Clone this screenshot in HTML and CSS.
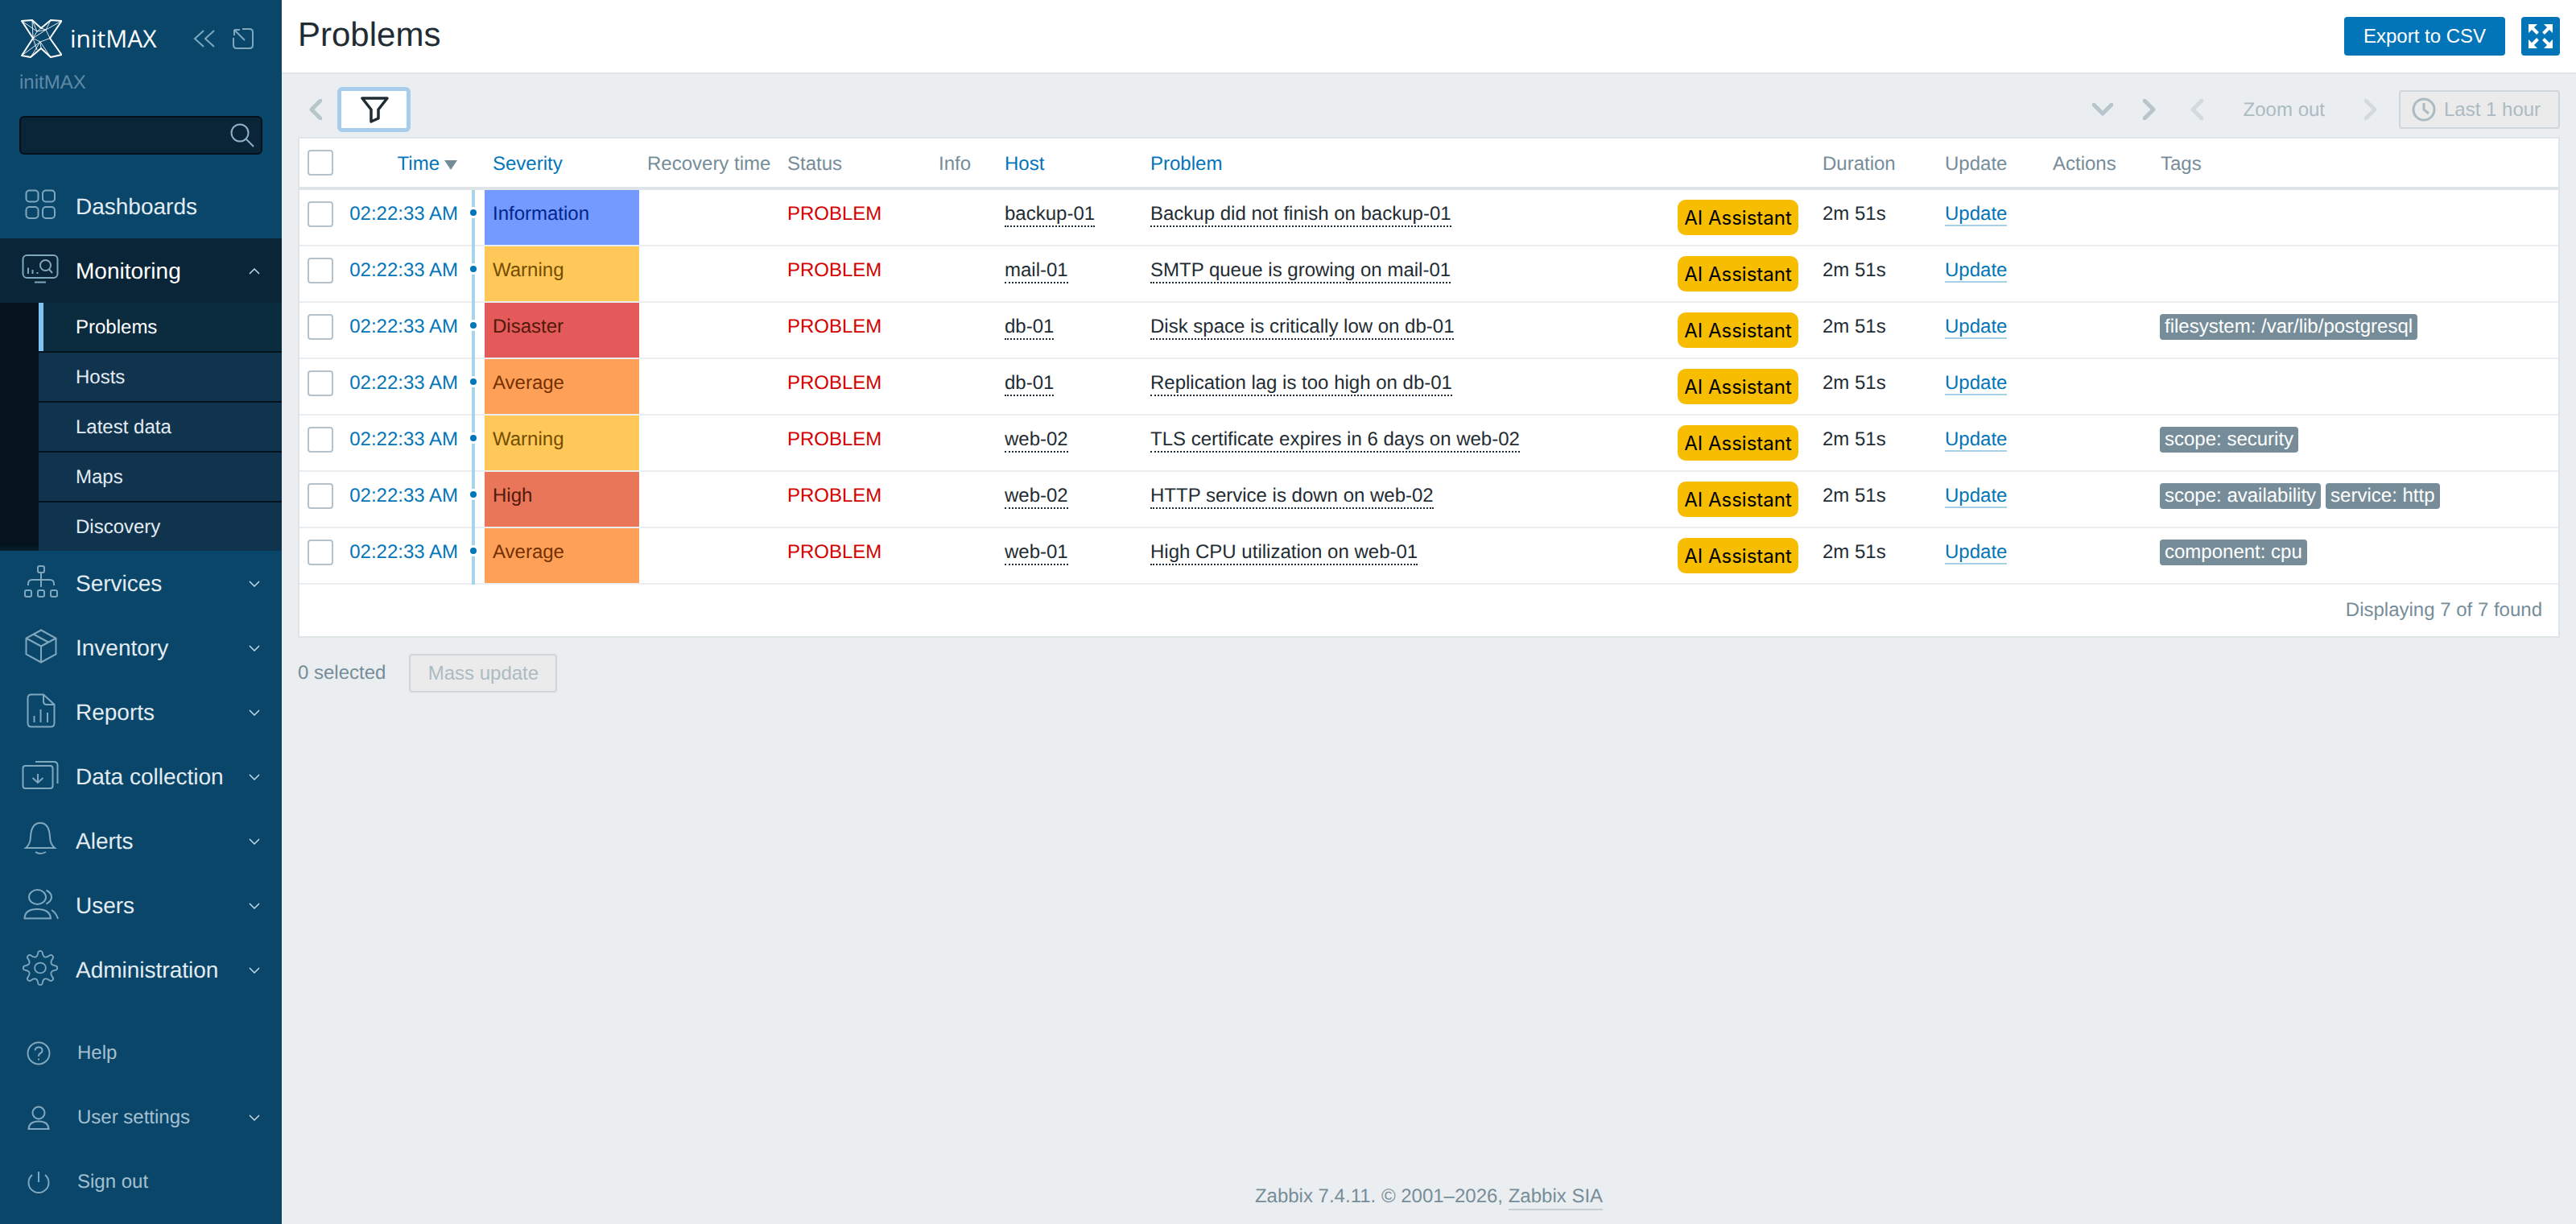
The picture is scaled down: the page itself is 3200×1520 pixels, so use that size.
FILE: index.html
```html
<!DOCTYPE html>
<html lang="en">
<head>
    <meta charset="UTF-8">
    <title>Problems</title>
    <link rel="stylesheet" href="styles.css">
</head>
<body>
    <aside class="sidebar">
        <div class="brand">
            <svg class="logo" viewBox="26 24 51 48" width="51" height="48">
                <path class="logo-edge" d="M27 26 40 25 51 35 63 25 76.500 26 62 47.500 76.500 68 63 71 51 60 38 71 27 69 41 47.500Z"/>
                <path class="logo-mesh" d="M40 25 46 39 57 37 63 25M27 26 46 39 41 47.500 50 52 62 47.500 57 37 51 35 46 39M76.500 26 57 37M41 47.500 57 37M50 52 51 60M50 52 38 71M50 52 63 71M62 47.500 76.500 68M41 47.500 46 62M27 69 50 52M40 25 41 47.500"/>
            </svg>
            <span class="brand-name">initMAX</span>
            <svg class="brand-btn" viewBox="0 0 28 24" width="28" height="24">
                <path d="M13 2 2 12 13 22M26 2 15 12 26 22"/>
            </svg>
            <svg class="brand-btn" viewBox="0 0 26 26" width="26" height="26">
                <path d="M12 1H21Q25 1 25 5V21Q25 25 21 25H5Q1 25 1 21V12M2 2 15 15M2 2H9M2 2V9"/>
            </svg>
        </div>
        <div class="server-name">initMAX</div>
        <div class="search">
            <svg viewBox="0 0 30 30" width="30" height="30">
                <circle cx="12" cy="12" r="10.500"/>
                <path d="M20 20 29 29"/>
            </svg>
        </div>

        <nav class="nav">
            <a class="nav-item">
                <svg class="nav-icon" viewBox="0 0 94 80" width="94" height="80">
                    <rect x="32.500" y="20.500" width="15" height="14" rx="4"/><rect x="53" y="20.500" width="15" height="14" rx="4"/>
                    <rect x="32.500" y="41" width="15" height="14" rx="4"/><rect x="53" y="41" width="15" height="14" rx="4"/>
                </svg>
                Dashboards
            </a>
            <div class="nav-open">
                <a class="nav-item">
                    <svg class="nav-icon" viewBox="0 0 94 80" width="94" height="80">
                        <rect x="28.500" y="21" width="43" height="28" rx="5"/>
                        <path d="M43 54.500H57M35 44V36.500M40.500 44V39M46.500 44V42"/>
                        <circle cx="56.500" cy="33.500" r="6.500"/>
                        <path d="M61 38.500 65 43"/>
                    </svg>
                    Monitoring
                    <svg class="caret" viewBox="0 0 14 8" width="14" height="8"><path d="M1 7 7 1 13 7"/></svg>
                </a>
                <div class="subnav">
                    <a class="sub-item active">Problems</a>
                    <a class="sub-item">Hosts</a>
                    <a class="sub-item">Latest data</a>
                    <a class="sub-item">Maps</a>
                    <a class="sub-item">Discovery</a>
                </div>
            </div>
            <a class="nav-item">
                <svg class="nav-icon" viewBox="0 0 94 80" width="94" height="80">
                    <rect x="47" y="19" width="8" height="8" rx="2"/>
                    <rect x="31" y="49" width="8" height="8" rx="2"/><rect x="47" y="49" width="8" height="8" rx="2"/><rect x="63" y="49" width="8" height="8" rx="2"/>
                    <path d="M51 27V45M35 43V41Q35 36 40 36H62Q67 36 67 41V43"/>
                </svg>
                Services
                <svg class="caret" viewBox="0 0 14 8" width="14" height="8"><path d="M1 1 7 7 13 1"/></svg>
            </a>
            <a class="nav-item">
                <svg class="nav-icon" viewBox="0 0 94 80" width="94" height="80">
                    <path d="M51 18.500 69.500 28.500V48.500L51 58.500 32.500 48.500V28.500ZM32.500 28.500 51 38.500 69.500 28.500M51 38.500V58.500M41.500 23.500 60 33.500"/>
                </svg>
                Inventory
                <svg class="caret" viewBox="0 0 14 8" width="14" height="8"><path d="M1 1 7 7 13 1"/></svg>
            </a>
            <a class="nav-item">
                <svg class="nav-icon" viewBox="0 0 94 80" width="94" height="80">
                    <path d="M54 18.500H39Q34.500 18.500 34.500 23V54Q34.500 58.500 39 58.500H63Q67.500 58.500 67.500 54V31ZM54 18.500V27Q54 31 58 31H67.500"/>
                    <path d="M42.500 53V45M50.500 53V37M59 53V41"/>
                </svg>
                Reports
                <svg class="caret" viewBox="0 0 14 8" width="14" height="8"><path d="M1 1 7 7 13 1"/></svg>
            </a>
            <a class="nav-item">
                <svg class="nav-icon" viewBox="0 0 94 80" width="94" height="80">
                    <rect x="28.500" y="27" width="37" height="28" rx="3"/>
                    <path d="M44 22H67Q71.500 22 71.500 26.500V49M47 37V48M40.500 42 47 48 53.500 42"/>
                </svg>
                Data collection
                <svg class="caret" viewBox="0 0 14 8" width="14" height="8"><path d="M1 1 7 7 13 1"/></svg>
            </a>
            <a class="nav-item">
                <svg class="nav-icon" viewBox="0 0 94 80" width="94" height="80">
                    <path d="M32 49H68Q62 44 62 35 61 18 50 18 39 18 38 35 38 44 32 49ZM44 54Q50 58 57 54"/>
                </svg>
                Alerts
                <svg class="caret" viewBox="0 0 14 8" width="14" height="8"><path d="M1 1 7 7 13 1"/></svg>
            </a>
            <a class="nav-item">
                <svg class="nav-icon" viewBox="0 0 94 80" width="94" height="80">
                    <ellipse cx="46.500" cy="30" rx="10.500" ry="9"/>
                    <path d="M30.500 56.500Q31 45 46 45 62 45 63 56.500ZM57.500 21.500Q64 25 64 30 64 35 57.500 38.500M64 46Q70 50 72 57"/>
                </svg>
                Users
                <svg class="caret" viewBox="0 0 14 8" width="14" height="8"><path d="M1 1 7 7 13 1"/></svg>
            </a>
            <a class="nav-item">
                <svg class="nav-icon" viewBox="0 0 94 80" width="94" height="80">
                    <g transform="translate(50 38) scale(.92)">
                        <path d="M-2.900-20.800A3 3 0 0 1 2.900-20.800Q4.400-10.800 12.600-16.800A3 3 0 0 1 16.800-12.600Q10.800-4.400 20.800-2.900A3 3 0 0 1 20.800 2.900Q10.800 4.400 16.800 12.600A3 3 0 0 1 12.600 16.800Q4.400 10.800 2.900 20.800A3 3 0 0 1-2.900 20.800Q-4.400 10.800-12.600 16.800A3 3 0 0 1-16.800 12.600Q-10.800 4.400-20.800 2.900A3 3 0 0 1-20.800-2.900Q-10.800-4.400-16.800-12.600A3 3 0 0 1-12.600-16.800Q-4.400-10.800-2.900-20.800Z"/>
                        <ellipse cx="0" cy="0" rx="7.500" ry="7"/>
                    </g>
                </svg>
                Administration
                <svg class="caret" viewBox="0 0 14 8" width="14" height="8"><path d="M1 1 7 7 13 1"/></svg>
            </a>
        </nav>

        <nav class="nav-user">
            <a class="nav-item small">
                <svg class="nav-icon" viewBox="0 0 96 80" width="96" height="80">
                    <circle cx="48" cy="41" r="13.500"/>
                    <path d="M43.500 37.500Q44 33.500 48 33.500 52.500 33.500 52.500 37.500 52.500 40 50 41 48 42 48 45M48 47.500V49.500"/>
                </svg>
                Help
            </a>
            <a class="nav-item small">
                <svg class="nav-icon" viewBox="0 0 96 80" width="96" height="80">
                    <circle cx="48" cy="35" r="7.500"/>
                    <path d="M35.500 55Q36 45.500 48 45.500 60 45.500 60.500 55Z"/>
                </svg>
                User settings
                <svg class="caret" viewBox="0 0 14 8" width="14" height="8"><path d="M1 1 7 7 13 1"/></svg>
            </a>
            <a class="nav-item small">
                <svg class="nav-icon" viewBox="0 0 96 80" width="96" height="80">
                    <path d="M40 32A12.500 12.500 0 1 0 56 32M48 28V41"/>
                </svg>
                Sign out
            </a>
        </nav>
    </aside>

    <main class="main">
        <header class="page-header">
            <h1>Problems</h1>
            <div class="header-controls">
                <button class="btn-primary">Export to CSV</button>
                <button class="btn-kiosk" aria-label="Fullscreen">
                    <svg viewBox="0 0 30 30" width="30" height="30">
                        <path d="M0 0H11L0 11ZM30 0H19L30 11ZM0 30H11L0 19ZM30 30H19L30 19Z"/>
                        <path class="kiosk-line" d="M5 5 11.500 11.500M25 5 18.500 11.500M5 25 11.500 18.500M25 25 18.500 18.500"/>
                    </svg>
                </button>
            </div>
        </header>

        <div class="toolbar">
            <svg class="arrow" viewBox="0 0 16 26" width="16" height="26"><path d="M14 2 3 13 14 24"/></svg>
            <button class="filter-tab" aria-label="Filter">
                <svg viewBox="0 0 38 34" width="38" height="34"><path d="M4 3H35L24 17V28L15 32V17Z"/></svg>
            </button>
            <div class="time-nav">
                <svg class="arrow down" viewBox="0 0 26 16" width="26" height="16"><path d="M2 2 13 13 24 2"/></svg>
                <svg class="arrow fwd" viewBox="0 0 16 26" width="16" height="26"><path d="M2 2 13 13 2 24"/></svg>
                <svg class="arrow off back-2" viewBox="0 0 16 26" width="16" height="26"><path d="M14 2 3 13 14 24"/></svg>
                <span class="zoom-out">Zoom out</span>
                <svg class="arrow off fwd-2" viewBox="0 0 16 26" width="16" height="26"><path d="M2 2 13 13 2 24"/></svg>
                <button class="btn-off range">
                    <svg viewBox="0 0 30 30" width="30" height="30"><circle cx="15" cy="15" r="13"/><path d="M15 7V15L21 20"/></svg>
                    Last 1 hour
                </button>
            </div>
        </div>

        <div class="table-wrap">
            <table class="problems">
                <colgroup>
                    <col class="c-check"><col class="c-time"><col class="c-line"><col class="c-sev"><col class="c-rec"><col class="c-status"><col class="c-info"><col class="c-host"><col class="c-prob"><col class="c-dur"><col class="c-upd"><col class="c-act"><col class="c-tags">
                </colgroup>
                <thead>
                    <tr>
                        <th><span class="check"></span></th>
                        <th class="sorted"><a>Time</a><i class="sort-down"></i></th>
                        <th></th>
                        <th><a>Severity</a></th>
                        <th>Recovery time</th>
                        <th>Status</th>
                        <th>Info</th>
                        <th><a>Host</a></th>
                        <th><a>Problem</a></th>
                        <th>Duration</th>
                        <th>Update</th>
                        <th>Actions</th>
                        <th>Tags</th>
                    </tr>
                </thead>
                <tbody>
                    <tr>
                        <td><span class="check"></span></td>
                        <td class="time"><a>02:22:33 AM</a></td>
                        <td class="timeline"></td>
                        <td class="sev info">Information</td>
                        <td></td>
                        <td class="status">PROBLEM</td>
                        <td></td>
                        <td><a class="dotted">backup-01</a></td>
                        <td><div class="prob-cell"><a class="dotted">Backup did not finish on backup-01</a><button class="btn-ai">AI Assistant</button></div></td>
                        <td>2m 51s</td>
                        <td><a class="link">Update</a></td>
                        <td></td>
                        <td></td>
                    </tr>
                    <tr>
                        <td><span class="check"></span></td>
                        <td class="time"><a>02:22:33 AM</a></td>
                        <td class="timeline"></td>
                        <td class="sev warning">Warning</td>
                        <td></td>
                        <td class="status">PROBLEM</td>
                        <td></td>
                        <td><a class="dotted">mail-01</a></td>
                        <td><div class="prob-cell"><a class="dotted">SMTP queue is growing on mail-01</a><button class="btn-ai">AI Assistant</button></div></td>
                        <td>2m 51s</td>
                        <td><a class="link">Update</a></td>
                        <td></td>
                        <td></td>
                    </tr>
                    <tr>
                        <td><span class="check"></span></td>
                        <td class="time"><a>02:22:33 AM</a></td>
                        <td class="timeline"></td>
                        <td class="sev disaster">Disaster</td>
                        <td></td>
                        <td class="status">PROBLEM</td>
                        <td></td>
                        <td><a class="dotted">db-01</a></td>
                        <td><div class="prob-cell"><a class="dotted">Disk space is critically low on db-01</a><button class="btn-ai">AI Assistant</button></div></td>
                        <td>2m 51s</td>
                        <td><a class="link">Update</a></td>
                        <td></td>
                        <td><div class="tags"><span class="tag">filesystem: /var/lib/postgresql</span></div></td>
                    </tr>
                    <tr>
                        <td><span class="check"></span></td>
                        <td class="time"><a>02:22:33 AM</a></td>
                        <td class="timeline"></td>
                        <td class="sev average">Average</td>
                        <td></td>
                        <td class="status">PROBLEM</td>
                        <td></td>
                        <td><a class="dotted">db-01</a></td>
                        <td><div class="prob-cell"><a class="dotted">Replication lag is too high on db-01</a><button class="btn-ai">AI Assistant</button></div></td>
                        <td>2m 51s</td>
                        <td><a class="link">Update</a></td>
                        <td></td>
                        <td></td>
                    </tr>
                    <tr>
                        <td><span class="check"></span></td>
                        <td class="time"><a>02:22:33 AM</a></td>
                        <td class="timeline"></td>
                        <td class="sev warning">Warning</td>
                        <td></td>
                        <td class="status">PROBLEM</td>
                        <td></td>
                        <td><a class="dotted">web-02</a></td>
                        <td><div class="prob-cell"><a class="dotted">TLS certificate expires in 6 days on web-02</a><button class="btn-ai">AI Assistant</button></div></td>
                        <td>2m 51s</td>
                        <td><a class="link">Update</a></td>
                        <td></td>
                        <td><div class="tags"><span class="tag">scope: security</span></div></td>
                    </tr>
                    <tr>
                        <td><span class="check"></span></td>
                        <td class="time"><a>02:22:33 AM</a></td>
                        <td class="timeline"></td>
                        <td class="sev high">High</td>
                        <td></td>
                        <td class="status">PROBLEM</td>
                        <td></td>
                        <td><a class="dotted">web-02</a></td>
                        <td><div class="prob-cell"><a class="dotted">HTTP service is down on web-02</a><button class="btn-ai">AI Assistant</button></div></td>
                        <td>2m 51s</td>
                        <td><a class="link">Update</a></td>
                        <td></td>
                        <td><div class="tags"><span class="tag">scope: availability</span><span class="tag">service: http</span></div></td>
                    </tr>
                    <tr>
                        <td><span class="check"></span></td>
                        <td class="time"><a>02:22:33 AM</a></td>
                        <td class="timeline"></td>
                        <td class="sev average">Average</td>
                        <td></td>
                        <td class="status">PROBLEM</td>
                        <td></td>
                        <td><a class="dotted">web-01</a></td>
                        <td><div class="prob-cell"><a class="dotted">High CPU utilization on web-01</a><button class="btn-ai">AI Assistant</button></div></td>
                        <td>2m 51s</td>
                        <td><a class="link">Update</a></td>
                        <td></td>
                        <td><div class="tags"><span class="tag">component: cpu</span></div></td>
                    </tr>
                </tbody>
            </table>
            <div class="table-stats">Displaying 7 of 7 found</div>
        </div>

        <div class="actions">
            <span class="selected">0 selected</span>
            <button class="btn-off mass">Mass update</button>
        </div>

        <footer class="footer">Zabbix 7.4.11. © 2001–2026, <a>Zabbix SIA</a></footer>
    </main>
</body>
</html>
```

FILE: styles.css
```css
* {
    margin: 0;
    padding: 0;
    box-sizing: border-box;
    font-family: 'Liberation Sans', Arial, sans-serif;
}

html, body {
    height: 1520px;
    overflow: hidden;
}

body {
    display: flex;
    background-color: #ebeef0;
    color: #1f2c33;
    font-size: 24px;
    line-height: 28px;
    text-rendering: geometricPrecision;
}

button {
    font-size: 24px;
    border: none;
}

svg path, svg rect, svg circle, svg ellipse {
    fill: none;
}

/* sidebar */
.sidebar {
    flex: 0 0 350px;
    background-color: #0a466a;
    color: #e3ecf2;
}

.brand {
    display: flex;
    align-items: center;
    height: 48px;
    margin-top: 24px;
    padding-left: 26px;
}

.logo-edge {
    stroke: #fff;
    stroke-width: 2;
    stroke-linejoin: round;
}

.logo-mesh {
    stroke: #fff;
    stroke-width: 0.9;
}

.brand-name {
    width: 163px;
    padding-left: 10px;
    color: #fff;
    font-family: 'Open Sans', sans-serif;
    font-size: 30px;
    font-weight: 500;
}

.brand-btn {
    margin-right: 21px;
}

.brand-btn path {
    stroke: #7fa8bf;
    stroke-width: 2;
}

.server-name {
    margin-top: 17px;
    padding-left: 24px;
    color: #5f8aa5;
}

.search {
    display: flex;
    align-items: center;
    justify-content: flex-end;
    width: 302px;
    height: 48px;
    margin: 27px 0 24px 24px;
    padding-right: 8px;
    background-color: #0a2537;
    border: 2px solid #04111a;
    border-radius: 6px;
}

.search circle, .search path {
    stroke: #8db0c4;
    stroke-width: 2;
}

.nav-item {
    display: flex;
    align-items: center;
    height: 80px;
    padding-top: 2px;
    font-size: 28px;
}

.nav-icon {
    flex: none;
    margin-top: -2px;
}

.nav-icon path, .nav-icon rect, .nav-icon circle, .nav-icon ellipse {
    stroke: #7fa8bf;
    stroke-width: 2;
}

.caret {
    margin-left: auto;
    margin-right: 27px;
}

.caret path {
    stroke: #c7d8e2;
    stroke-width: 1.5;
}

.nav-open > .nav-item {
    background-color: #0a2537;
    color: #fff;
}

.subnav {
    padding-left: 48px;
    background-color: #04131c;
    box-shadow: inset 0 -10px 10px -10px rgba(10, 70, 106, 0.6);
}

.sub-item {
    display: block;
    height: 60px;
    margin-bottom: 2px;
    padding-left: 46px;
    background-color: #10334e;
    font-size: 24px;
    line-height: 62px;
}

.sub-item:last-child {
    margin-bottom: 0;
}

.sub-item.active {
    padding-left: 40px;
    background-color: #0b2b3f;
    border-left: 6px solid #7fc4f5;
    color: #fff;
}

.nav-user {
    margin-top: 23px;
}

.nav-item.small {
    color: #a5c0d0;
    font-size: 24px;
}

/* page header */
.main {
    display: flex;
    flex: 1;
    flex-direction: column;
    min-width: 0;
}

.page-header {
    display: flex;
    align-items: center;
    justify-content: space-between;
    height: 92px;
    padding: 0 20px;
    background-color: #fff;
    border-bottom: 2px solid #dfe4e7;
}

.page-header h1 {
    padding-bottom: 4px;
    font-size: 42px;
    font-weight: normal;
    line-height: 48px;
}

.header-controls {
    display: flex;
    gap: 20px;
}

.btn-primary {
    width: 200px;
    height: 48px;
    background-color: #0275b8;
    border-radius: 4px;
    color: #fff;
}

.btn-kiosk {
    display: flex;
    align-items: center;
    justify-content: center;
    width: 48px;
    height: 48px;
    background-color: #0275b8;
    border-radius: 4px;
}

.btn-kiosk path {
    fill: #fff;
}

.btn-kiosk .kiosk-line {
    fill: none;
    stroke: #fff;
    stroke-width: 4;
}

/* filter bar */
.toolbar {
    display: flex;
    align-items: center;
    height: 78px;
    padding: 20px 20px 10px 34px;
}

.arrow path {
    stroke: #b8c5cc;
    stroke-width: 5;
    stroke-linecap: round;
    stroke-linejoin: round;
}

.arrow.off path {
    stroke: #d3dade;
}

.filter-tab {
    display: flex;
    align-items: center;
    justify-content: center;
    flex: none;
    width: 91px;
    height: 56px;
    margin-left: 19px;
    background-color: #fff;
    border: 5px solid #a8cdec;
    border-radius: 6px;
}

.filter-tab path {
    stroke: #1f2c33;
    stroke-width: 3.5;
    stroke-linejoin: round;
}

.time-nav {
    display: flex;
    align-items: center;
    margin-left: auto;
}

.fwd {
    margin-left: 37px;
}

.back-2 {
    margin-left: 43px;
}

.zoom-out {
    margin-left: 50px;
    padding-top: 1px;
    color: #acbbc2;
}

.fwd-2 {
    margin-left: 49px;
}

.btn-off {
    background-color: #ebebeb;
    border: 2px solid #ced6da;
    border-radius: 4px;
    color: #acbbc2;
    font-family: inherit;
}

.range {
    display: flex;
    align-items: center;
    gap: 10px;
    width: 200px;
    height: 48px;
    margin-left: 27px;
    padding-left: 14px;
}

.range circle, .range path {
    stroke: #acbbc2;
    stroke-width: 3;
}

/* table */
.table-wrap {
    margin: 0 20px;
    background-color: #fff;
    border: 2px solid #dfe4e7;
}

.problems {
    width: 100%;
    table-layout: fixed;
    border-collapse: separate;
    border-spacing: 0;
}

.c-check { width: 52px; }
.c-time { width: 156px; }
.c-line { width: 22px; }
.c-sev { width: 192px; }
.c-rec { width: 174px; }
.c-status { width: 188px; }
.c-info { width: 82px; }
.c-host { width: 181px; }
.c-prob { width: 835px; }
.c-dur { width: 152px; }
.c-upd { width: 134px; }
.c-act { width: 134px; }
.c-tags { width: 504px; }

.problems th {
    height: 64px;
    padding: 3px 10px 0;
    border-bottom: 4px solid #dfe4e7;
    color: #768d99;
    font-weight: normal;
    text-align: left;
    white-space: nowrap;
}

.problems th a {
    color: #0275b8;
}

.problems th .check {
    margin-top: -3px;
}

.problems th.sorted {
    padding-right: 12px;
    text-align: right;
}

.sort-down {
    display: inline-block;
    margin-left: 6px;
    border-top: 12px solid #768d99;
    border-left: 8px solid transparent;
    border-right: 8px solid transparent;
}

.problems td {
    height: 70px;
    padding: 16px 10px 0;
    border-bottom: 2px solid #ebeef0;
    vertical-align: top;
    white-space: nowrap;
}

.check {
    display: block;
    width: 32px;
    height: 32px;
    margin-top: -2px;
    background-color: #fff;
    border: 2px solid #b5c2ca;
    border-radius: 4px;
}

.problems .time {
    padding-right: 11px;
    text-align: right;
}

.time a, .link {
    color: #0275b8;
}

.link {
    border-bottom: 2px solid rgba(2, 117, 184, 0.35);
}

.problems .timeline {
    position: relative;
    padding: 0;
}

.timeline::before {
    content: "";
    position: absolute;
    top: 0;
    bottom: -2px;
    left: 6px;
    width: 4px;
    background-color: #a8d4ec;
}

.timeline::after {
    content: "";
    position: absolute;
    top: 21px;
    left: 1px;
    width: 8px;
    height: 8px;
    background-color: #0275b8;
    border: 3px solid #fff;
    border-radius: 50%;
}

.sev.info { background-color: #7499ff; color: #00268e; }
.sev.warning { background-color: #ffc859; color: #734d00; }
.sev.average { background-color: #ffa059; color: #733100; }
.sev.high { background-color: #e97659; color: #52190b; }
.sev.disaster { background-color: #e45959; color: #52190b; }

.status {
    color: #d40000;
}

.dotted {
    display: inline-block;
    border-bottom: 2px dotted #1f2c33;
}

.prob-cell {
    display: flex;
    align-items: flex-start;
    justify-content: space-between;
    padding-right: 10px;
}

.btn-ai {
    width: 150px;
    height: 44px;
    margin-top: -4px;
    background-color: #f7bd00;
    border-radius: 10px;
    color: #000;
    font-family: Inter, sans-serif;
}

.tags {
    display: flex;
    gap: 6px;
    margin-left: -1px;
}

.tag {
    height: 32px;
    margin-top: -2px;
    padding: 0 6px;
    background-color: #768d99;
    border-radius: 4px;
    color: #fff;
    line-height: 32px;
}

.table-stats {
    height: 64px;
    padding-right: 20px;
    color: #768d99;
    line-height: 64px;
    text-align: right;
}

.actions {
    display: flex;
    align-items: center;
    gap: 29px;
    margin: 20px 20px 0;
}

.selected {
    color: #768d99;
}

.mass {
    width: 184px;
    height: 48px;
}

.footer {
    margin-top: auto;
    padding: 24px 0 20px;
    color: #768d99;
    text-align: center;
}

.footer a {
    padding-bottom: 2px;
    border-bottom: 2px solid #c5ced3;
}
```
